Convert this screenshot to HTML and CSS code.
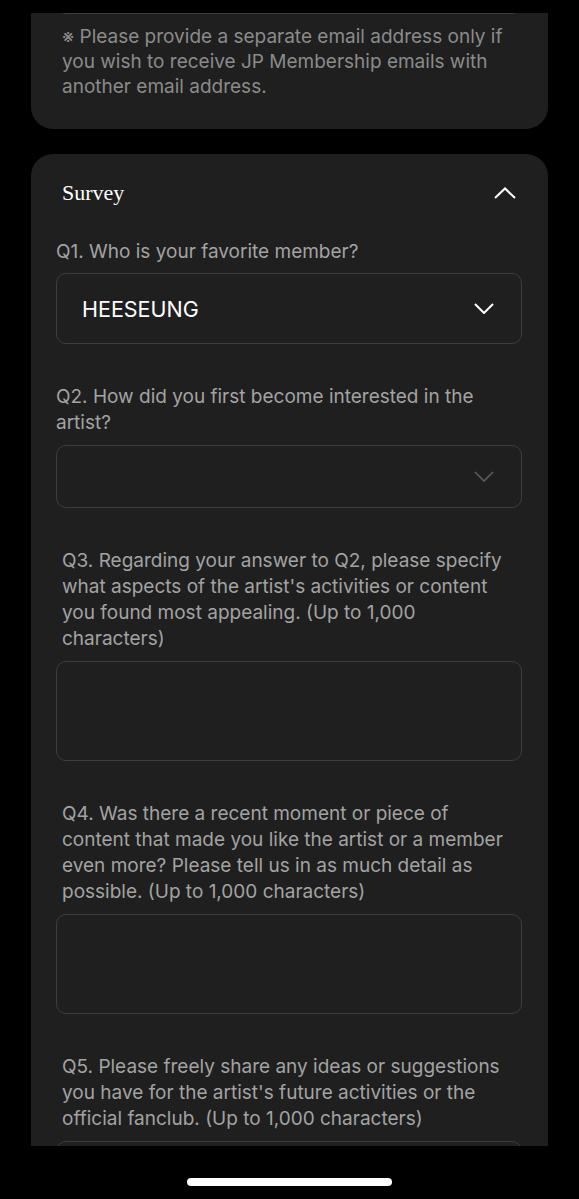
FILE: index.html
```html
<!DOCTYPE html>
<html lang="en">
<head>
  <meta charset="UTF-8" />
  <meta name="viewport" content="width=device-width, initial-scale=1.0"/>
  <title>Survey</title>
  <link rel="stylesheet" href="styles.css">
</head>
<body>

  <div class="screen">
    <div class="scroll">
      <div class="feed">

        <div class="card">
          <div class="field field-input"></div>
          <p class="note">※ Please provide a separate email address only if you wish to receive JP Membership emails with another email address.</p>
        </div>

        <div class="card survey">
          <div class="survey-head">
            <h2>Survey</h2>
            <svg class="chev-up" width="22" height="12" viewBox="0 0 22 12">
              <path d="M1 11 L11 1.5 L21 11" fill="none" stroke="#fff" stroke-width="2"/>
            </svg>
          </div>

          <p class="q">Q1. Who is your favorite member?</p>
          <div class="field select select-tall">
            <span class="value">HEESEUNG</span>
            <svg width="20" height="11" viewBox="0 0 20 11">
              <path d="M1 1 L10 10 L19 1" fill="none" stroke="#fff" stroke-width="2"/>
            </svg>
          </div>

          <p class="q">Q2. How did you first become interested in the artist?</p>
          <div class="field select">
            <span class="value"></span>
            <svg width="20" height="11" viewBox="0 0 20 11">
              <path d="M1 1 L10 10 L19 1" fill="none" stroke="#5e5e5e" stroke-width="1.6"/>
            </svg>
          </div>

          <p class="q indent">Q3. Regarding your answer to Q2, please specify what aspects of the artist's activities or content you found most appealing. (Up to 1,000 characters)</p>
          <div class="field textarea"></div>

          <p class="q indent">Q4. Was there a recent moment or piece of content that made you like the artist or a member even more? Please tell us in as much detail as possible. (Up to 1,000 characters)</p>
          <div class="field textarea"></div>

          <p class="q indent">Q5. Please freely share any ideas or suggestions you have for the artist's future activities or the official fanclub. (Up to 1,000 characters)</p>
          <div class="field textarea"></div>
        </div>

      </div>
    </div>

    <div class="home-bar"></div>
  </div>

</body>
</html>
```

FILE: styles.css
```css
* {
  box-sizing: border-box;
}

body {
  margin: 0;
  padding: 0;
  background: #000;
  font-family: Inter, 'Noto Sans', sans-serif;
  color: #fff;
  overflow: hidden;
}

.screen {
  width: 579px;
  height: 1199px;
  display: flex;
  flex-direction: column;
}

.scroll {
  margin-top: 13px;
  height: 1133px;
  overflow: hidden;
  padding: 0 31px;
}

.feed {
  margin-top: -69px;
}

.card {
  background: #1f1f1f;
  border-radius: 22px;
  padding: 20px 26px 30px 25px;
  margin-bottom: 25px;
}

.field {
  border: 1.5px solid #3d3d3d;
  border-radius: 10px;
  background: #1f1f1f;
}

.field-input {
  height: 50px;
}

.note {
  margin: 10px 10px 0 6px;
  font-size: 19px;
  line-height: 25px;
  color: #8b8b8b;
}

/* Survey */
.survey {
  padding-top: 25px;
}

.survey-head {
  display: flex;
  justify-content: space-between;
  align-items: center;
  height: 28px;
}

.survey-head h2 {
  margin: 0 0 0 6px;
  font-family: 'Liberation Serif', serif;
  font-weight: normal;
  font-size: 22px;
  line-height: 28px;
  color: #fff;
}

.chev-up {
  margin-right: 6px;
}

.q {
  margin: 40px 10px 9px 0;
  font-size: 19px;
  line-height: 26px;
  color: #a3a3a3;
}

.survey-head + .q {
  margin-top: 32px;
  margin-bottom: 8px;
}

.q.indent {
  margin-left: 6px;
}

.select {
  height: 63px;
  display: flex;
  align-items: center;
  justify-content: space-between;
  padding: 0 27px 0 25px;
}

.select-tall {
  height: 71px;
}

.select .value {
  font-size: 21.5px;
  color: #fff;
}

.textarea {
  height: 100px;
}

.home-bar {
  width: 205px;
  height: 8px;
  border-radius: 4px;
  background: #fff;
  margin: 32px auto 0;
}
```
